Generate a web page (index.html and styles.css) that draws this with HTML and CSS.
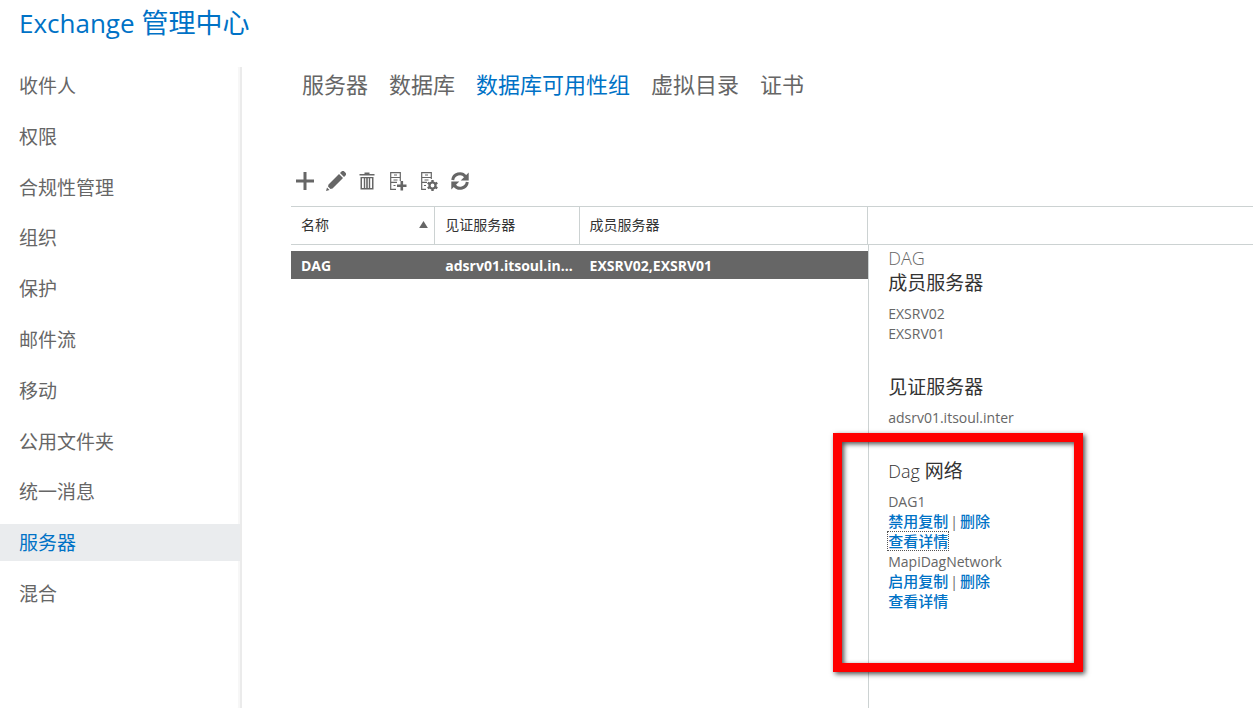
FILE: index.html
```html
<!DOCTYPE html>
<html lang="zh-CN">
<head>
<meta charset="utf-8">
<title>Exchange 管理中心</title>
<link rel="stylesheet" href="styles.css">
</head>
<body>
<div class="app">
  <header class="masthead"><h1 class="brand"><span class="brand-latin">Exchange</span> 管理中心</h1></header>
  <div class="shell">
    <nav class="sidebar" aria-label="功能">
      <ul class="side-list">
        <li><a class="side-link" href="#">收件人</a></li>
        <li><a class="side-link" href="#">权限</a></li>
        <li><a class="side-link" href="#">合规性管理</a></li>
        <li><a class="side-link" href="#">组织</a></li>
        <li><a class="side-link" href="#">保护</a></li>
        <li><a class="side-link" href="#">邮件流</a></li>
        <li><a class="side-link" href="#">移动</a></li>
        <li><a class="side-link" href="#">公用文件夹</a></li>
        <li><a class="side-link" href="#">统一消息</a></li>
        <li><a class="side-link side-link-active" href="#" aria-current="page">服务器</a></li>
        <li><a class="side-link" href="#">混合</a></li>
      </ul>
    </nav>
    <main class="content">
      <nav class="tabs" aria-label="服务器">
        <a class="tab" href="#">服务器</a>
        <a class="tab" href="#">数据库</a>
        <a class="tab tab-active" href="#" aria-current="page">数据库可用性组</a>
        <a class="tab" href="#">虚拟目录</a>
        <a class="tab" href="#">证书</a>
      </nav>
      <div class="toolbar">
        <button class="tool" type="button" aria-label="新建"><svg viewBox="0 0 20 20"><path d="M8.500 1h3v7.500H19v3h-7.500V19h-3v-7.500H1v-3h7.500z"/></svg></button>
        <button class="tool" type="button" aria-label="编辑"><svg viewBox="0 0 20 20"><path d="M0 20l1-3.500 2.500 2.500zM2.500 13.500L13 3l4 4L6.500 17.500 4.500 18 2 15.500zM14 2l1.300-1.300a2.200 2.200 0 0 1 3.200 0l.8.800a2.200 2.200 0 0 1 0 3.200L18 6z"/></svg></button>
        <button class="tool" type="button" aria-label="删除"><svg viewBox="0 0 20 20"><path d="M7.500 1.500h5V3h5v1.600h-15V3h5z"/><path d="M3.500 6h13v12.500h-13zM5 7.200V17h1.800V7.200zM8.200 7.200V17h1V7.200zM10.800 7.200V17h1V7.200zM13.200 7.200V17H15V7.200z" fill-rule="evenodd"/></svg></button>
        <button class="tool" type="button" aria-label="管理成员"><svg viewBox="0 0 20 20"><path d="M8 18.300H2.700V1.700h9.600V10M2.700 6.500h9.600M2.700 11.300H9M6 4h3M5.500 9h4M5.500 14.500h2" fill="none" stroke="currentColor" stroke-width="1.200"/><path d="M12.500 10h2.600v3.500h3.400v2.600h-3.400V19.500h-2.600v-3.400H9v-2.600h3.500z"/></svg></button>
        <button class="tool" type="button" aria-label="配置网络"><svg viewBox="0 0 20 20"><path d="M7 18.300H2.700V1.700h9.600V8M2.700 6.500h9.600M2.700 11.300H8M6 4h3M5.500 9h4M5 14.500h2" fill="none" stroke="currentColor" stroke-width="1.200"/><circle cx="13.500" cy="14.500" r="3" fill="none" stroke="currentColor" stroke-width="2.200"/><path d="M13.500 9v3M13.500 17v3M8.700 11.700l2.600 1.500M15.700 15.800l2.600 1.500M8.700 17.300l2.600-1.500M15.700 13.200l2.600-1.500" fill="none" stroke="currentColor" stroke-width="2.400"/></svg></button>
        <button class="tool" type="button" aria-label="刷新"><svg viewBox="0 0 20 20"><path d="M2.700 9a7.200 7.200 0 0 1 12.800-3.500M17.300 11a7.200 7.200 0 0 1-12.800 3.500" fill="none" stroke="currentColor" stroke-width="3"/><path d="M18.700 1.500v8h-8zM1.300 18.500v-8h8z"/></svg></button>
      </div>
      <div class="workspace">
        <section class="list-pane">
          <table class="grid">
            <thead><tr>
              <th class="col-name" scope="col"><span class="sort-head">名称<svg class="sort-mark" viewBox="0 0 10 8"><path d="M5 0l5 8H0z"/></svg></span></th>
              <th class="col-witness" scope="col">见证服务器</th>
              <th class="col-members" scope="col">成员服务器</th>
            </tr></thead>
            <tbody><tr>
              <td>DAG</td><td>adsrv01.itsoul.in...</td><td>EXSRV02,EXSRV01</td>
            </tr></tbody>
          </table>
        </section>
        <aside class="detail-pane">
          <div class="detail-head"></div>
          <div class="detail-body">
            <h2 class="detail-title">DAG</h2>
            <section class="block">
              <h3 class="block-title">成员服务器</h3>
              <p class="line">EXSRV02</p>
              <p class="line">EXSRV01</p>
            </section>
            <section class="block">
              <h3 class="block-title">见证服务器</h3>
              <p class="line">adsrv01.itsoul.inter</p>
            </section>
            <section class="block block-marked">
              <h3 class="block-title"><span class="thin">Dag</span> 网络</h3>
              <p class="line">DAG1</p>
              <p class="line actions"><a class="action" href="#">禁用复制</a><span>|</span><a class="action" href="#">删除</a></p>
              <p class="line actions"><a class="action action-focus" href="#">查看详情</a></p>
              <p class="line">MapiDagNetwork</p>
              <p class="line actions"><a class="action" href="#">启用复制</a><span>|</span><a class="action" href="#">删除</a></p>
              <p class="line actions"><a class="action" href="#">查看详情</a></p>
              <div class="marker"></div>
            </section>
          </div>
        </aside>
      </div>
    </main>
  </div>
</div>
</body>
</html>
```
FILE: styles.css
```css
* { box-sizing: border-box; }
body {
  margin: 0;
  background: #fff;
  color: #666;
  font-family: "Open Sans", "Noto Sans CJK SC", sans-serif;
  font-size: 14px;
}
h1, h2, h3, p, ul { margin: 0; padding: 0; font-weight: 400; }
a { text-decoration: none; color: inherit; }
.app { display: flex; flex-direction: column; min-height: 100vh; }
.masthead { height: 67px; padding: 3px 19px; }
.brand { color: #0072c6; font-size: 27px; line-height: 40px; }
.brand-latin { font-size: 26px; }
.shell { display: flex; flex: 1; }
.sidebar {
  width: 242px;
  flex: none;
  border-right: 2px solid #ebebeb;
  box-shadow: inset -2px 0 1px #f7f7f7;
}
.side-list {
  display: flex;
  flex-direction: column;
  justify-content: space-between;
  height: 545px;
  list-style: none;
}
.side-link { display: block; padding: 1px 19px 0; font-size: 19px; line-height: 36px; }
.side-link-active { background: #eaecee; color: #0072c6; }
.content { flex: 1; min-width: 0; padding: 0 7px 0 49px; display: flex; flex-direction: column; }
.tabs { display: flex; gap: 21px; padding-left: 11px; font-size: 22px; line-height: 34px; }
.tab { white-space: nowrap; }
.tab-active { color: #0072c6; }
.toolbar { display: flex; gap: 11px; margin: 70px 0 15px 4px; }
.tool {
  width: 20px;
  height: 20px;
  padding: 0;
  border: 0;
  background: none;
  color: #666;
}
.tool svg { display: block; width: 20px; height: 20px; fill: currentColor; }
.workspace { display: flex; flex: 1; }
.list-pane { flex: 3 1 0; min-width: 0; }
.grid { width: 100%; table-layout: fixed; border-collapse: separate; border-spacing: 0; }
.grid th {
  height: 39px;
  padding: 0 10px 3px;
  border: solid #ccd2d2;
  border-width: 1px 1px 1px 0;
  color: #333;
  font-size: 14px;
  font-weight: 400;
  text-align: left;
}
.grid th.col-name, .col-witness { width: 25%; }
.col-members { width: 50%; }
.grid th.col-name { padding-right: 6px; }
.sort-head { display: flex; justify-content: space-between; align-items: center; }
.sort-mark { width: 9px; height: 7px; fill: #666; }
.grid tbody::before { content: ""; display: block; height: 6px; }
.grid td {
  height: 28px;
  padding: 1px 10px 0;
  background: #666;
  color: #fff;
  font-size: 14px;
  font-weight: 700;
  line-height: 20px;
  white-space: nowrap;
}
.detail-pane { flex: 2 1 0; min-width: 0; display: flex; flex-direction: column; }
.detail-head { height: 39px; border: solid #ccd2d2; border-width: 1px 0; }
.detail-body { flex: 1; padding: 1px 19px; border-left: 1px solid #ccd2d2; }
.detail-title { font-size: 18px; font-weight: 300; line-height: 24px; }
.block { margin-bottom: 30px; }
.block-title { margin-bottom: 8px; color: #333; font-size: 19px; line-height: 26px; }
.thin { font-size: 18px; font-weight: 300; }
.line { line-height: 20px; white-space: nowrap; }
.actions { display: flex; align-items: flex-start; gap: 2px; height: 20px; }
.action { color: #0072c6; font-size: 15px; font-weight: 500; line-height: 18px; }
.action-focus { outline: 1px dotted #555; outline-offset: 0; }
.block-marked { position: relative; }
.marker {
  position: absolute;
  top: -25px;
  left: -55px;
  width: 250px;
  height: 239px;
  border: 9px solid #f00;
  box-shadow: 2px 2px 5px rgba(0, 0, 0, .7), inset 2px 2px 5px rgba(0, 0, 0, .7);
  pointer-events: none;
}
```
